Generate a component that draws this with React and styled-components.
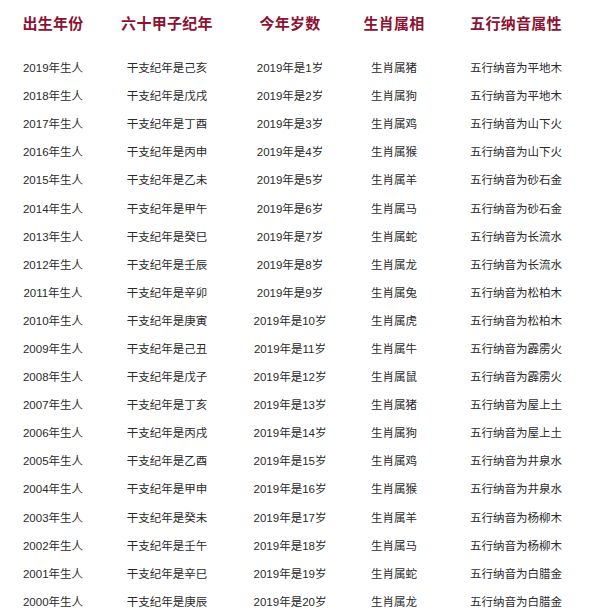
import React from "react";
import styled, { createGlobalStyle } from "styled-components";

const Global = createGlobalStyle`
  html, body { margin: 0; padding: 0; background: #fff; }
  body { font-family: "Liberation Sans", "Noto Sans CJK SC", sans-serif; }
`;

const Table = styled.div`
  width: 600px;
  display: grid;
  grid-template-columns: 106px 122px 124px 84px 160px;
`;

const HeadCell = styled.div`
  height: 53px;
  padding-bottom: 9px;
  box-sizing: border-box;
  display: flex;
  align-items: center;
  justify-content: center;
  font-family: "Noto Sans CJK SC", sans-serif;
  font-weight: 700;
  font-size: 15px;
  color: #8c1231;
  letter-spacing: 0.3px;
`;

const Cell = styled.div`
  height: 28.1px;
  display: flex;
  align-items: center;
  justify-content: center;
  font-family: "Liberation Sans", "Noto Sans CJK SC", sans-serif;
  font-size: 11.5px;
  color: #2a2a2a;
  white-space: nowrap;
`;

const heads = ["出生年份", "六十甲子纪年", "今年岁数", "生肖属相", "五行纳音属性"];
const gz = ["己亥", "戊戌", "丁酉", "丙申", "乙未", "甲午", "癸巳", "壬辰", "辛卯", "庚寅", "己丑", "戊子", "丁亥", "丙戌", "乙酉", "甲申", "癸未", "壬午", "辛巳", "庚辰"];
const sx = ["猪", "狗", "鸡", "猴", "羊", "马", "蛇", "龙", "兔", "虎", "牛", "鼠", "猪", "狗", "鸡", "猴", "羊", "马", "蛇", "龙"];
const ny = ["平地木", "平地木", "山下火", "山下火", "砂石金", "砂石金", "长流水", "长流水", "松柏木", "松柏木", "霹雳火", "霹雳火", "屋上土", "屋上土", "井泉水", "井泉水", "杨柳木", "杨柳木", "白腊金", "白腊金"];

export default function App() {
  return (
    <>
      <Global />
      <Table>
        {heads.map((h) => (
          <HeadCell key={h}>{h}</HeadCell>
        ))}
        {gz.map((g, i) => (
          <React.Fragment key={i}>
            <Cell>{2019 - i}年生人</Cell>
            <Cell>干支纪年是{g}</Cell>
            <Cell>2019年是{i + 1}岁</Cell>
            <Cell>生肖属{sx[i]}</Cell>
            <Cell>五行纳音为{ny[i]}</Cell>
          </React.Fragment>
        ))}
      </Table>
    </>
  );
}
